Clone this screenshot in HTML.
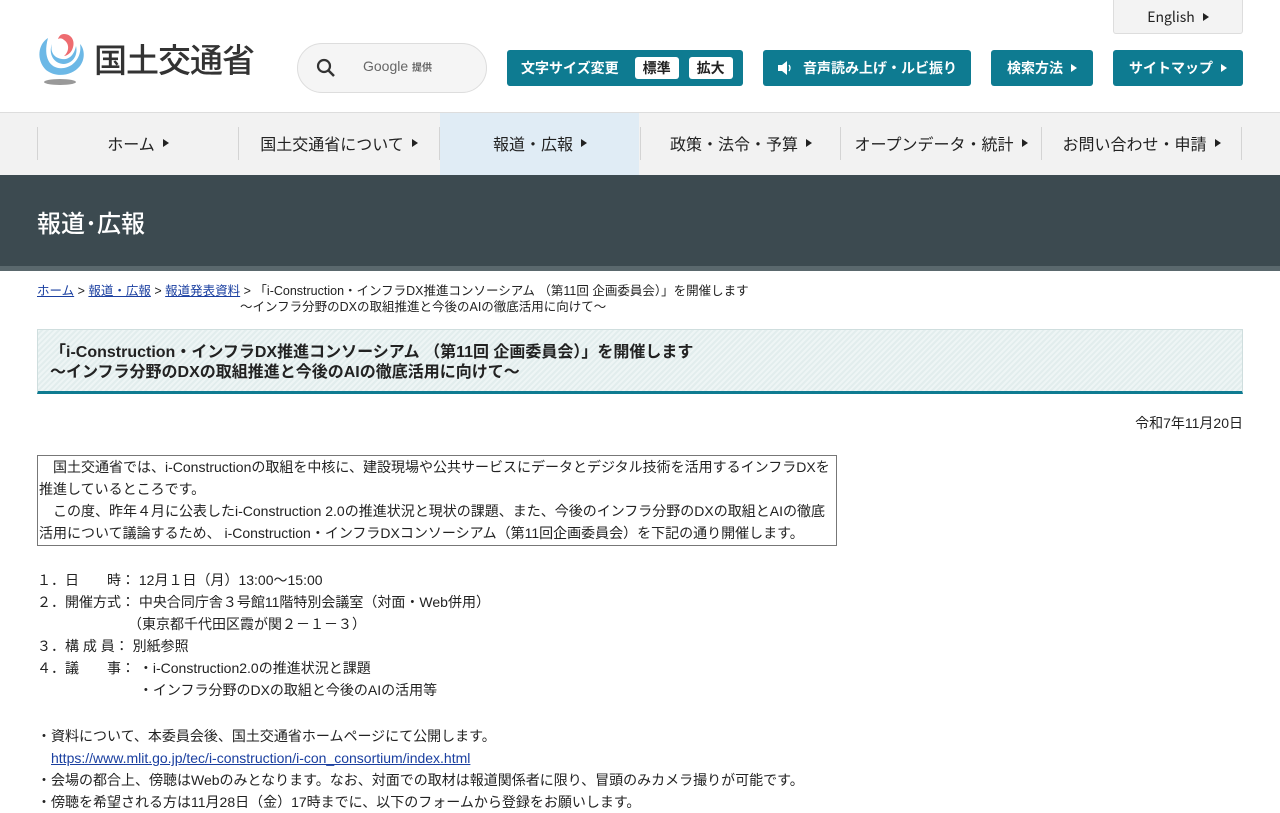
<!DOCTYPE html>
<html><head><meta charset="utf-8"><style>
*{margin:0;padding:0;box-sizing:border-box}
body{width:1280px;height:800px;overflow:hidden;background:#fff;font-family:"Liberation Sans","Noto Sans CJK JP",sans-serif;color:#222;position:relative}
.a{position:absolute;white-space:nowrap}
.btn{position:absolute;top:50px;height:36px;background:#0e7b91;border-radius:3px;color:#fff;font-size:14px;font-weight:bold;display:flex;align-items:center;justify-content:center;font-family:"Noto Sans CJK JP",sans-serif}
.tri{display:inline-block;width:0;height:0;border-left:6px solid currentColor;border-top:4px solid transparent;border-bottom:4px solid transparent;margin-left:8px}
.nav{position:absolute;top:112px;left:0;width:1280px;height:63px;background:#f2f2f2;border-top:1px solid #ddd}
.ni{position:absolute;top:14px;height:33px;width:201px;border-left:1px solid #d4d4d4;display:flex;align-items:center;justify-content:center;font-size:16px;font-family:"Noto Sans CJK JP",sans-serif;color:#222;padding-bottom:2px}
.t{font-size:14px;line-height:22px}
a{color:#1a3fa0}
</style></head><body>
<div class="a" style="left:1113px;top:0;width:130px;height:34px;background:#f3f3f3;border:1px solid #ddd;border-top:none;border-radius:0 0 3px 3px;font-size:14px;display:flex;align-items:center;justify-content:center;font-family:'Noto Sans CJK JP',sans-serif">English<span class="tri"></span></div>
<svg class="a" style="left:36px;top:32px" width="52" height="56" viewBox="0 0 52 56">
<path d="M12 6 C2 12 0 28 10 38 C20 46 36 44 44 34 C50 26 48 16 44 12 C46 22 40 34 28 36 C16 38 6 28 12 6Z" fill="#6cb8e6"/>
<path d="M16 12 C12 22 18 32 28 32 C38 31 42 22 40 14 C38 24 32 28 26 27 C18 26 14 20 16 12Z" fill="#6cb8e6"/>
<path d="M28 2 C36 2 40 10 36 18 C34 22 30 24 28 24 C33 20 34 12 28 8 C26 6 24 6 22 7 C23 4 25 2 28 2Z" fill="#ee6c70"/>
<ellipse cx="24" cy="50" rx="16" ry="3" fill="#999"/>
</svg>
<div class="a" style="left:94px;top:36px;font-size:33px;font-weight:500;color:#333;font-family:'Noto Sans CJK JP',sans-serif;letter-spacing:-1px;line-height:44px">国土交通省</div>
<div class="a" style="left:297px;top:43px;width:190px;height:50px;border:1px solid #ddd;border-radius:25px;background:#f5f5f5"></div>
<svg class="a" style="left:316px;top:58px" width="20" height="20"><circle cx="8" cy="8" r="6" stroke="#333" stroke-width="2.2" fill="none"/><line x1="12.5" y1="12.5" x2="18" y2="18" stroke="#333" stroke-width="2.5"/></svg>
<div class="a" style="left:363px;top:58px;font-size:14px;color:#666">Google <span style="font-size:10px;font-family:'Noto Sans CJK JP';font-weight:bold">提供</span></div>
<div class="btn" style="left:507px;width:236px;justify-content:flex-start;padding-left:14px">文字サイズ変更<span style="background:#fff;color:#222;border-radius:3px;padding:0 8px;margin-left:16px;line-height:22px">標準</span><span style="background:#fff;color:#222;border-radius:3px;padding:0 8px;margin-left:10px;line-height:22px">拡大</span></div>
<div class="btn" style="left:763px;width:208px"><svg width="16" height="16" style="margin-right:10px"><path d="M1 5h4l5-4v14l-5-4H1z" fill="#fff"/><path d="M12 5q2 3 0 6" stroke="#fff" fill="none" stroke-width="1.3"/></svg>音声読み上げ・ルビ振り</div>
<div class="btn" style="left:991px;width:102px">検索方法<span class="tri"></span></div>
<div class="btn" style="left:1113px;width:130px">サイトマップ<span class="tri"></span></div>
<div class="nav">
<div class="ni" style="left:37px">ホーム<span class="tri"></span></div>
<div class="ni" style="left:238px">国土交通省について<span class="tri"></span></div>
<div style="position:absolute;left:440px;top:0;width:199px;height:62px;background:#e0ecf5"></div>
<div class="ni" style="left:439px">報道・広報<span class="tri"></span></div>
<div class="ni" style="left:640px">政策・法令・予算<span class="tri"></span></div>
<div class="ni" style="left:840px">オープンデータ・統計<span class="tri"></span></div>
<div class="ni" style="left:1041px;border-right:1px solid #d4d4d4">お問い合わせ・申請<span class="tri"></span></div>
</div>
<div class="a" style="left:0;top:175px;width:1280px;height:91px;background:#3c4a50"></div>
<div class="a" style="left:0;top:266px;width:1280px;height:5px;background:#5a686d"></div>
<div class="a" style="left:37px;top:205px;font-size:24px;color:#fff;font-family:'Noto Sans CJK JP',sans-serif;font-weight:500;line-height:34px">報道･広報</div>
<div class="a" style="left:37px;top:283px;font-size:12.5px;line-height:16px"><a href="#">ホーム</a> &gt; <a href="#">報道・広報</a> &gt; <a href="#">報道発表資料</a> &gt; 「i-Construction・インフラDX推進コンソーシアム （第11回 企画委員会）」を開催します</div>
<div class="a" style="left:240px;top:299px;font-size:12.5px;line-height:16px">～インフラ分野のDXの取組推進と今後のAIの徹底活用に向けて～</div>
<div class="a" style="left:37px;top:329px;width:1206px;height:65px;border:1px solid #cfdede;border-bottom:3px solid #0e7b91;background:repeating-linear-gradient(135deg,#eef5f5 0 2px,#e2eded 2px 4px)"></div>
<div class="a" style="left:50px;top:343px;font-size:16px;font-weight:bold;line-height:20px">「i-Construction・インフラDX推進コンソーシアム （第11回 企画委員会）」を開催します<br>～インフラ分野のDXの取組推進と今後のAIの徹底活用に向けて～</div>
<div class="a t" style="right:37px;top:412px">令和7年11月20日</div>
<div class="a t" style="left:37px;top:455px;width:800px;height:91px;border:1px solid #777;white-space:normal;padding-left:1px">　国土交通省では、i-Constructionの取組を中核に、建設現場や公共サービスにデータとデジタル技術を活用するインフラDXを推進しているところです。<br>　この度、昨年４月に公表したi-Construction 2.0の推進状況と現状の課題、また、今後のインフラ分野のDXの取組とAIの徹底活用について議論するため、 i-Construction・インフラDXコンソーシアム（第11回企画委員会）を下記の通り開催します。</div>
<div class="a t" style="left:37px;top:569px">１．日　　時： 12月１日（月）13:00～15:00<br>２．開催方式： 中央合同庁舎３号館11階特別会議室（対面・Web併用）<br>　　　　　　　（東京都千代田区霞が関２－１－３）<br>３．構 成 員： 別紙参照<br>４．議　　事： ・i-Construction2.0の推進状況と課題<br>　　　　　　　 ・インフラ分野のDXの取組と今後のAIの活用等<br></div>
<div class="a t" style="left:37px;top:725px">・資料について、本委員会後、国土交通省ホームページにて公開します。<br>　<a href="#">https://www.mlit.go.jp/tec/i-construction/i-con_consortium/index.html</a><br>・会場の都合上、傍聴はWebのみとなります。なお、対面での取材は報道関係者に限り、冒頭のみカメラ撮りが可能です。<br>・傍聴を希望される方は11月28日（金）17時までに、以下のフォームから登録をお願いします。</div>
</body></html>
